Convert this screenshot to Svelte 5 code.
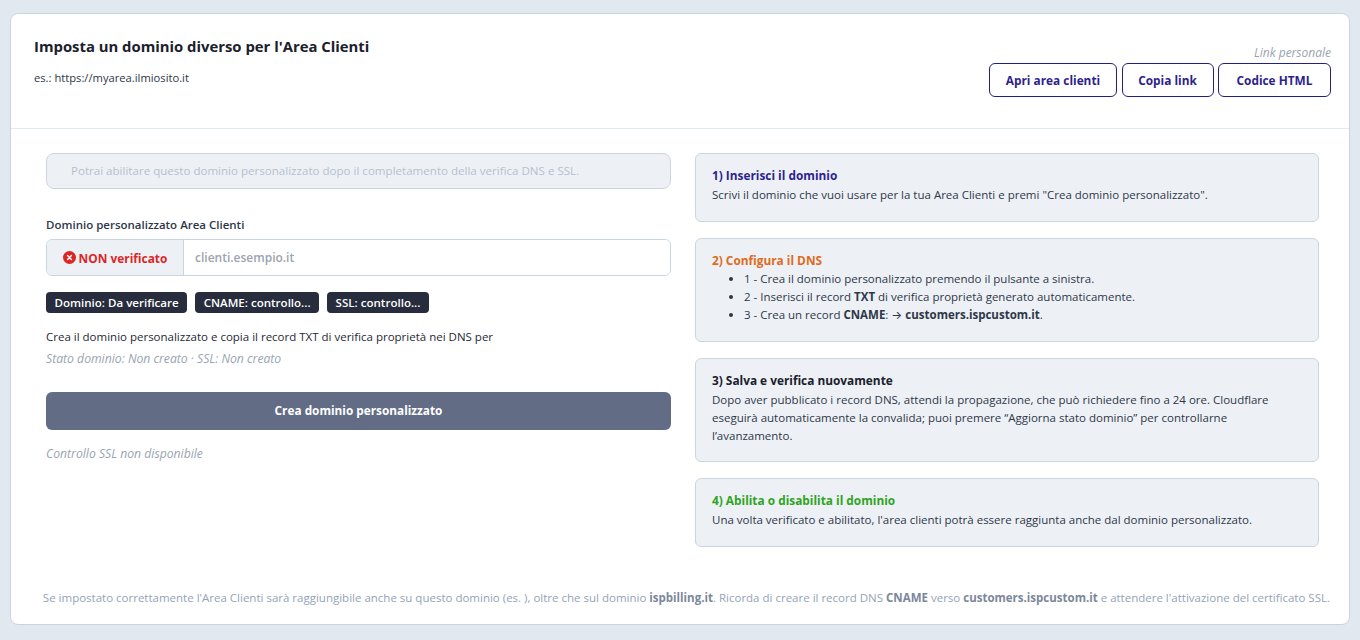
<script lang="ts">
	const badges = ['Dominio: Da verificare', 'CNAME: controllo...', 'SSL: controllo...'];
	const actions = ['Apri area clienti', 'Copia link', 'Codice HTML'];
</script>

<div class="page">
	<div class="card">
		<header class="card-header">
			<div>
				<h2>Imposta un dominio diverso per l'Area Clienti</h2>
				<p class="example">es.: https://myarea.ilmiosito.it</p>
			</div>
			<div class="link-box">
				<span class="link-label">Link personale</span>
				<div class="actions">
					{#each actions as action}
						<button type="button">{action}</button>
					{/each}
				</div>
			</div>
		</header>

		<div class="card-body">
			<section class="left">
				<div class="notice">Potrai abilitare questo dominio personalizzato dopo il completamento della verifica DNS e SSL.</div>

				<div class="field-label">Dominio personalizzato Area Clienti</div>
				<div class="input-group">
					<span class="status">
						<svg width="13" height="13" viewBox="0 0 16 16" aria-hidden="true">
							<circle cx="8" cy="8" r="8" fill="#dc2626" />
							<path d="M5.6 5.6l4.8 4.8M10.4 5.6l-4.8 4.8" stroke="#fff" stroke-width="1.8" stroke-linecap="round" />
						</svg>
						NON verificato
					</span>
					<input type="text" placeholder="clienti.esempio.it" />
				</div>

				<div class="badges">
					{#each badges as badge}
						<span class="badge">{badge}</span>
					{/each}
				</div>

				<p class="hint">Crea il dominio personalizzato e copia il record TXT di verifica proprietà nei DNS per</p>
				<p class="muted state">Stato dominio: Non creato · SSL: Non creato</p>

				<button type="button" class="create">Crea dominio personalizzato</button>

				<p class="muted ssl">Controllo SSL non disponibile</p>
			</section>

			<section class="right">
				<div class="step">
					<div class="step-title indigo">1) Inserisci il dominio</div>
					<div>Scrivi il dominio che vuoi usare per la tua Area Clienti e premi "Crea dominio personalizzato".</div>
				</div>
				<div class="step">
					<div class="step-title orange">2) Configura il DNS</div>
					<ul>
						<li>1 - Crea il dominio personalizzato premendo il pulsante a sinistra.</li>
						<li>2 - Inserisci il record <b>TXT</b> di verifica proprietà generato automaticamente.</li>
						<li>3 - Crea un record <b>CNAME</b>: <span class="arrow">→</span> <b>customers.ispcustom.it</b>.</li>
					</ul>
				</div>
				<div class="step">
					<div class="step-title">3) Salva e verifica nuovamente</div>
					<div>Dopo aver pubblicato i record DNS, attendi la propagazione, che può richiedere fino a 24 ore. Cloudflare eseguirà automaticamente la convalida; puoi premere “Aggiorna stato dominio” per controllarne l’avanzamento.</div>
				</div>
				<div class="step">
					<div class="step-title green">4) Abilita o disabilita il dominio</div>
					<div>Una volta verificato e abilitato, l'area clienti potrà essere raggiunta anche dal dominio personalizzato.</div>
				</div>
			</section>
		</div>

		<footer class="card-footer">
			Se impostato correttamente l'Area Clienti sarà raggiungibile anche su questo dominio (es. ), oltre che sul dominio <b>ispbilling.it</b>. Ricorda di creare il record DNS <b>CNAME</b> verso <b>customers.ispcustom.it</b> e attendere l'attivazione del certificato SSL.
		</footer>
	</div>
</div>

<style>
	:global(body) {
		margin: 0;
		background: #e2e8f0;
		font-family: 'Open Sans', 'Noto Sans', sans-serif;
	}

	.page {
		height: 640px;
		padding: 13px 10px 15px;
		box-sizing: border-box;
		color: #1f2937;
		font-size: 11.5px;
	}

	.card {
		height: 612px;
		display: flex;
		flex-direction: column;
		background: #fff;
		border: 1px solid #cbd5e1;
		border-radius: 8px;
		box-sizing: border-box;
	}

	.card-header {
		height: 115px;
		flex: none;
		display: flex;
		justify-content: space-between;
		padding: 22px 18px 0 23px;
		box-sizing: border-box;
		border-bottom: 1px solid #e2e8f0;
	}

	h2 {
		margin: 0;
		font-size: 14.85px;
		line-height: 20px;
		font-weight: 700;
		color: #1a202c;
	}

	.example {
		margin: 14px 0 0;
		font-size: 11.2px;
		line-height: 16px;
		color: #2d3748;
	}

	.link-box {
		display: flex;
		flex-direction: column;
		align-items: flex-end;
	}

	.link-label {
		font-size: 12px;
		line-height: 16px;
		font-style: italic;
		color: #9aa3b2;
		margin-top: 9px;
	}

	.actions {
		display: grid;
		grid-template-columns: 128px 92px 113px;
		gap: 4.5px;
		margin-top: 2px;
	}

	.actions button {
		height: 34px;
		padding: 0;
		background: #fff;
		border: 1px solid #231f87;
		border-radius: 6px;
		color: #2e1f8f;
		font: 700 11.85px 'Open Sans', sans-serif;
	}

	.card-body {
		flex: 1;
		display: grid;
		grid-template-columns: 625px 624px;
		gap: 24px;
		padding: 24px 0 0 35px;
	}

	.notice {
		height: 36px;
		line-height: 34px;
		padding: 0 24px;
		box-sizing: border-box;
		background: #edf1f6;
		border: 1px solid #cbd5e1;
		border-radius: 8px;
		color: #b6bfcd;
		font-size: 11.57px;
	}

	.field-label {
		margin-top: 28px;
		line-height: 16px;
		font-weight: 600;
		color: #2d3748;
	}

	.input-group {
		display: flex;
		height: 37px;
		margin-top: 6px;
		border: 1px solid #cbd5e1;
		border-radius: 6px;
		overflow: hidden;
		box-sizing: border-box;
	}

	.status {
		width: 136px;
		flex: none;
		display: flex;
		align-items: center;
		justify-content: center;
		gap: 3px;
		background: #edf1f6;
		border-right: 1px solid #cbd5e1;
		color: #dc2626;
		font-size: 11.9px;
		font-weight: 700;
	}

	input {
		flex: 1;
		border: 0;
		outline: 0;
		padding: 0 11px;
		font: 600 12px 'Open Sans', sans-serif;
	}

	input::placeholder {
		color: #9ca3af;
	}

	.badges {
		display: flex;
		gap: 8px;
		margin-top: 16px;
	}

	.badge {
		height: 21px;
		line-height: 21px;
		padding: 0 8.5px;
		background: #272d3d;
		border-radius: 4px;
		color: #fff;
		font-size: 11.55px;
		font-weight: 600;
	}

	.hint {
		margin: 15px 0 0;
		line-height: 18px;
	}

	.muted {
		font-size: 12.2px;
		font-style: italic;
		color: #9aa3b2;
	}

	.state {
		margin: 5px 0 0;
		line-height: 16px;
	}

	.create {
		display: block;
		width: 100%;
		height: 38px;
		margin-top: 25px;
		padding: 0 0 2px;
		background: #626c85;
		border: 0;
		border-radius: 6px;
		color: #fff;
		font: 700 11.8px 'Open Sans', sans-serif;
	}

	.ssl {
		margin: 16px 0 0;
		line-height: 16px;
	}

	.right {
		display: flex;
		flex-direction: column;
		gap: 16px;
	}

	.step {
		padding: 12px 16px 17px;
		background: #edf1f6;
		border: 1px solid #cbd5e1;
		border-radius: 6px;
		line-height: 18px;
		color: #2d3748;
	}

	.step:nth-child(3) {
		padding-bottom: 16px;
	}

	.step-title {
		margin-bottom: 1px;
		font-size: 11.85px;
		font-weight: 700;
		line-height: 19px;
		color: #1a202c;
	}

	.indigo { color: #2e1f8f; }
	.orange { color: #dd6b20; }
	.green { color: #2fa41d; }

	ul {
		margin: -1px 0 0;
		padding-left: 32px;
	}

	.arrow {
		font-family: Inter, sans-serif;
	}

	b {
		font-weight: 700;
	}

	.card-footer {
		flex: none;
		padding: 0 19px 18px 0;
		text-align: right;
		line-height: 16px;
		color: #94a3b8;
		white-space: nowrap;
	}

	.card-footer b {
		color: #7c879b;
	}
</style>
